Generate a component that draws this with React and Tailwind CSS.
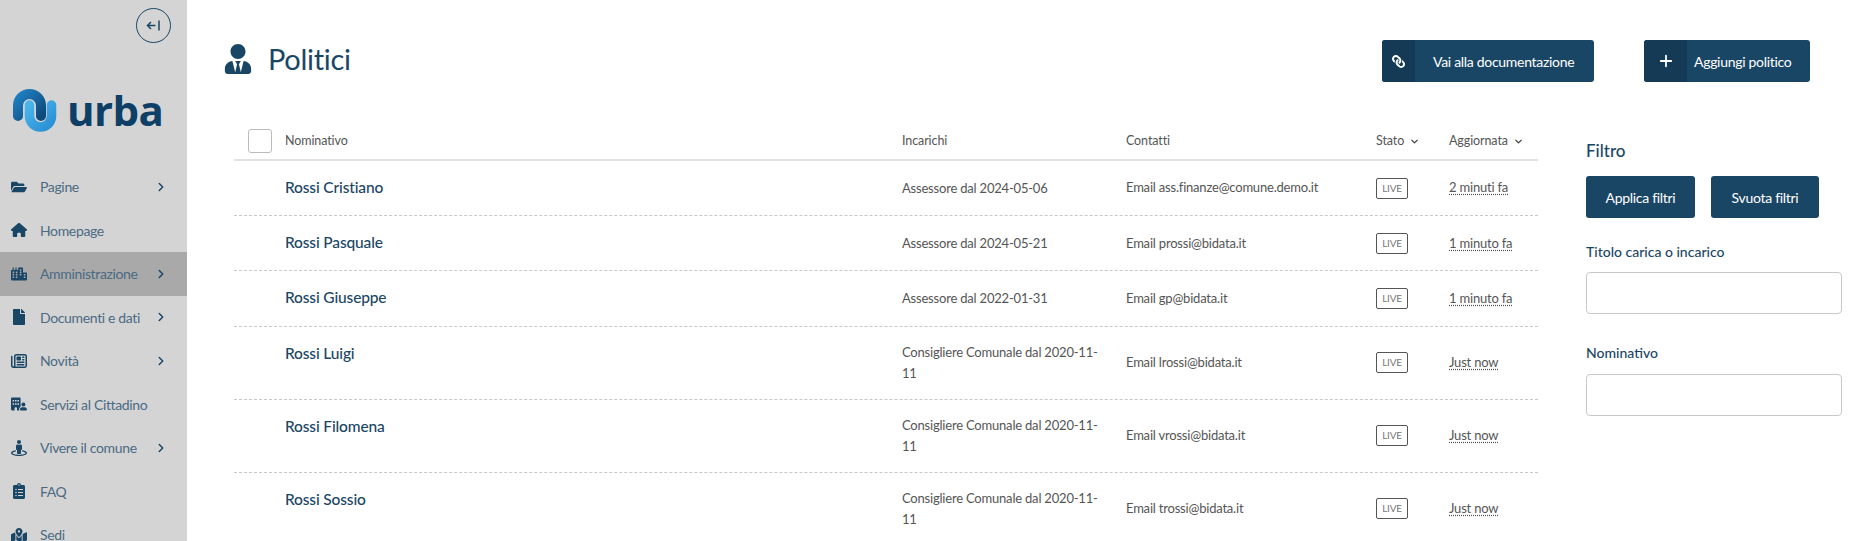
import React from "react";
import { ChevronRight, ChevronDown, Plus } from "lucide-react";
import { FaFolderOpen, FaCity, FaFile, FaStreetView, FaClipboardList, FaMapMarkedAlt, FaUserTie, FaLink } from "react-icons/fa";
import { FaBuildingUser, FaHouse, FaRegNewspaper } from "react-icons/fa6";

const navItems = [
    { label: "Pagine", icon: FaFolderOpen, arrow: true },
    { label: "Homepage", icon: FaHouse },
    { label: "Amministrazione", icon: FaCity, arrow: true, active: true },
    { label: "Documenti e dati", icon: FaFile, arrow: true },
    { label: "Novità", icon: FaRegNewspaper, arrow: true },
    { label: "Servizi al Cittadino", icon: FaBuildingUser },
    { label: "Vivere il comune", icon: FaStreetView, arrow: true },
    { label: "FAQ", icon: FaClipboardList },
    { label: "Sedi", icon: FaMapMarkedAlt },
];

const rows = [
    { name: "Rossi Cristiano", role: "Assessore dal 2024-05-06", email: "Email ass.finanze@comune.demo.it", updated: "2 minuti fa" },
    { name: "Rossi Pasquale", role: "Assessore dal 2024-05-21", email: "Email prossi@bidata.it", updated: "1 minuto fa" },
    { name: "Rossi Giuseppe", role: "Assessore dal 2022-01-31", email: "Email gp@bidata.it", updated: "1 minuto fa" },
    { name: "Rossi Luigi", role: "Consigliere Comunale dal 2020-11-11", email: "Email lrossi@bidata.it", updated: "Just now", tall: true },
    { name: "Rossi Filomena", role: "Consigliere Comunale dal 2020-11-11", email: "Email vrossi@bidata.it", updated: "Just now", tall: true },
    { name: "Rossi Sossio", role: "Consigliere Comunale dal 2020-11-11", email: "Email trossi@bidata.it", updated: "Just now", tall: true },
];

const columns = "grid grid-cols-[51px_617px_224px_250px_73px_89px]";

const Logo = () => (
    <div className="flex items-center h-[44px] pl-[13px] mt-[45px]">
        <svg width="44" height="44" viewBox="13 79 44 44" className="shrink-0">
            <defs>
                <linearGradient id="logoDark" x1="0" y1="0" x2="1" y2="1">
                    <stop offset="0" stopColor="#1f7fc0" />
                    <stop offset="1" stopColor="#0f4a7d" />
                </linearGradient>
                <linearGradient id="logoLight" x1="0" y1="0" x2="1" y2="1">
                    <stop offset="0" stopColor="#48b4ea" />
                    <stop offset="1" stopColor="#2a8fd4" />
                </linearGradient>
            </defs>
            <path d="M18 107 V96.5 A11.5 11.5 0 0 1 41 96.5 V107" fill="none" stroke="url(#logoDark)" strokeWidth="10" strokeLinecap="round" />
            <path d="M29.5 96 V107 A11 11 0 0 0 51.5 107 V96" fill="none" stroke="url(#logoLight)" strokeWidth="9.5" strokeLinecap="round" />
        </svg>
        <span className="ml-[10px] font-['Open_Sans',sans-serif] font-bold text-[42px] leading-none text-[#0e3f66] tracking-[-0.6px]">urba</span>
    </div>
);

const CollapseIcon = () => (
    <svg width="15" height="15" viewBox="0 0 15 15" fill="none" stroke="currentColor" strokeWidth="1.5">
        <path d="M9.5 7.5 H1.5 M5 4 L1.5 7.5 L5 11" />
        <path d="M13 2.5 V12.5" />
    </svg>
);

const Sidebar = () => (
    <aside className="w-[187px] shrink-0 h-full bg-[#d4d4d4] overflow-hidden">
        <div className="flex justify-end pt-[8px] pr-[16px]">
            <button className="w-[35px] h-[35px] rounded-full border border-[#1a4665] flex items-center justify-center text-[#1a4665]">
                <CollapseIcon />
            </button>
        </div>
        <Logo />
        <nav className="mt-[33px]">
            {navItems.map((item) => (
                <div key={item.label} className={`flex items-center h-[43.5px] pl-[10px] text-[#4b6a83] ${item.active ? "bg-[#a9a9a9]" : ""}`}>
                    <span className="w-[30px] shrink-0 text-[#1a4665]">
                        <span className="w-[17px] flex justify-center">
                            <item.icon size={16} />
                        </span>
                    </span>
                    <span className="w-[114px] shrink-0 text-[14px] tracking-[-0.35px] whitespace-nowrap">{item.label}</span>
                    {item.arrow && <ChevronRight size={14} strokeWidth={2.5} className="text-[#1a4665]" />}
                </div>
            ))}
        </nav>
    </aside>
);

const ActionButton = ({ icon, iconWidth, textPad, width, children }) => (
    <button className={`flex items-stretch h-[42px] rounded-[3px] overflow-hidden bg-[#1a4665] text-white text-[14px] tracking-[-0.3px] ${width}`}>
        <span className={`flex items-center justify-center bg-[#143a56] ${iconWidth}`}>{icon}</span>
        <span className={`flex items-center whitespace-nowrap ${textPad}`}>{children}</span>
    </button>
);

const Table = () => (
    <div className="w-[1304px] ml-[10px] shrink-0 text-[#555] text-[13px] tracking-[-0.2px]">
        <div className={`${columns} h-[41px] pt-[3px] items-center border-b-2 border-[#e2e2e2] text-[12.5px] tracking-[-0.1px]`}>
            <div className="pl-[14px]">
                <div className="w-[24px] h-[24px] rounded-[3px] border border-[#bbb]" />
            </div>
            <div>Nominativo</div>
            <div>Incarichi</div>
            <div>Contatti</div>
            <div className="flex items-center gap-[5px]">Stato <ChevronDown size={11} strokeWidth={2.5} className="text-[#333]" /></div>
            <div className="flex items-center gap-[5px]">Aggiornata <ChevronDown size={11} strokeWidth={2.5} className="text-[#333]" /></div>
        </div>
        {rows.map((row) => (
            <div key={row.name} className={`${columns} items-center border-b border-dashed border-[#c8c8c8] ${row.tall ? "h-[73px]" : "h-[55.2px]"}`}>
                <div />
                <div className="self-start pt-[15px] text-[15.5px] tracking-[-0.15px] font-medium text-[#1a4665]">{row.name}</div>
                <div className="pr-[20px] leading-[21px]">{row.role}</div>
                <div>{row.email}</div>
                <div>
                    <span className="inline-flex items-center justify-center w-[32px] h-[21px] rounded-[2px] border border-[#555] text-[10px] text-[#777]">LIVE</span>
                </div>
                <div>
                    <span className="underline decoration-dotted underline-offset-2">{row.updated}</span>
                </div>
            </div>
        ))}
    </div>
);

const Filters = () => (
    <div className="w-[256px] ml-[48px] shrink-0 pt-[21px] text-[#1a4665]">
        <h3 className="text-[17px] leading-[20px] font-medium">Filtro</h3>
        <div className="flex gap-[16px] mt-[15px]">
            <button className="w-[109px] h-[42px] rounded-[3px] bg-[#1a4665] text-white text-[14px] tracking-[-0.3px]">Applica filtri</button>
            <button className="w-[108px] h-[42px] rounded-[3px] bg-[#1a4665] text-white text-[14px] tracking-[-0.3px]">Svuota filtri</button>
        </div>
        <label className="block mt-[25px] text-[14px] leading-[18px] font-medium">Titolo carica o incarico</label>
        <input className="block mt-[11px] w-full h-[42px] rounded-[4px] border border-[#c8c8c8]" />
        <label className="block mt-[30px] text-[14px] leading-[18px] font-medium">Nominativo</label>
        <input className="block mt-[12px] w-full h-[42px] rounded-[4px] border border-[#c8c8c8]" />
    </div>
);

const App = () => {
    return (
        <div className="flex h-screen overflow-hidden bg-white font-['Lato',sans-serif]">
            <Sidebar />
            <main className="flex-1 pl-[36px] pt-[40px] min-w-0">
                <div className="flex items-center h-[42px] pr-[45px]">
                    <div className="flex items-center pb-[4px]">
                        <FaUserTie size={30} className="text-[#1a4665]" />
                        <h1 className="ml-[15px] text-[29px] tracking-[-0.3px] text-[#1a4665]">Politici</h1>
                    </div>
                    <div className="ml-auto flex gap-[50px]">
                        <ActionButton width="w-[212px]" iconWidth="w-[33px]" textPad="pl-[18px]" icon={<FaLink size={13} className="-scale-x-100" />}>
                            Vai alla documentazione
                        </ActionButton>
                        <ActionButton width="w-[166px]" iconWidth="w-[43px]" textPad="pl-[7px]" icon={<Plus size={18} strokeWidth={2.4} />}>
                            Aggiungi politico
                        </ActionButton>
                    </div>
                </div>
                <div className="flex mt-[38px] ml-[1px]">
                    <Table />
                    <Filters />
                </div>
            </main>
        </div>
    );
};

export default App;
